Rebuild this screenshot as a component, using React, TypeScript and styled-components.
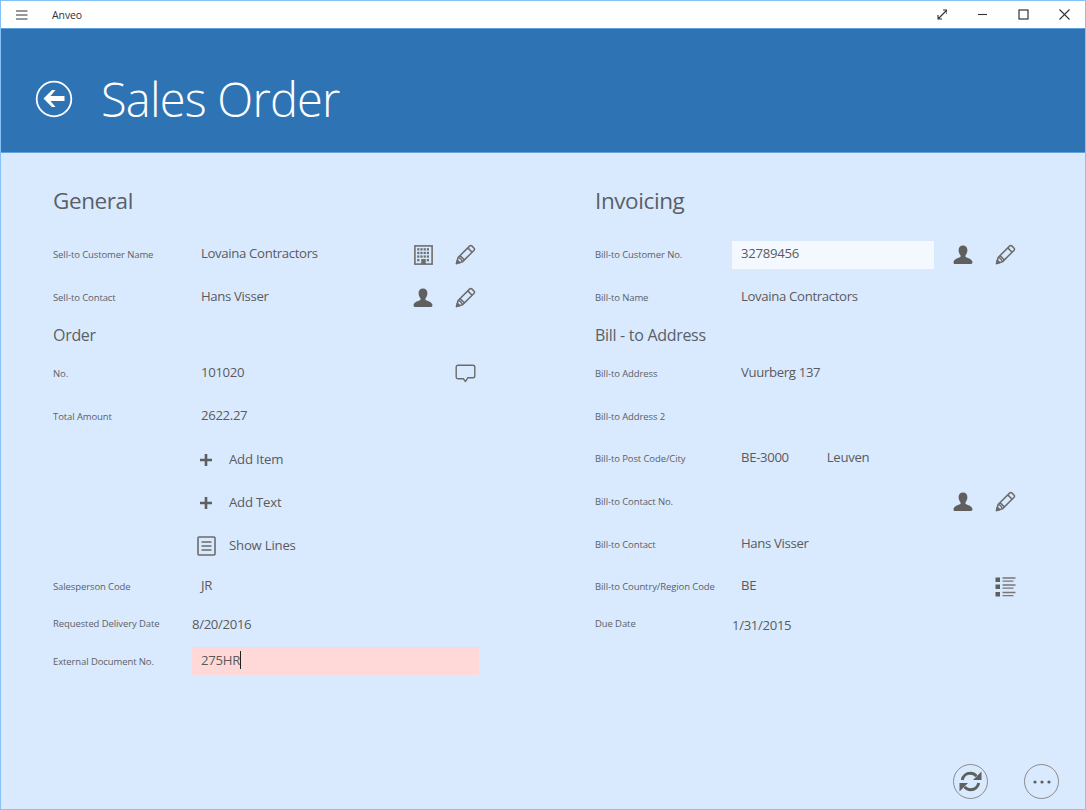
import React from "react";
import styled, { createGlobalStyle } from "styled-components";

const Global = createGlobalStyle`
  html, body { margin: 0; padding: 0; height: 100%; }
  body { font-family: "Open Sans", "Noto Sans", "Liberation Sans", sans-serif; color: #5b5b5b; }
`;

const Frame = styled.div`
  box-sizing: border-box;
  width: 1086px;
  height: 810px;
  display: flex;
  flex-direction: column;
  border: 1px solid #86c1f7;
  background: #d9eaff;
  overflow: hidden;
`;

const TitleBar = styled.div`
  flex: 0 0 27px;
  display: flex;
  align-items: center;
  background: #fff;
  color: #333;
`;

const Burger = styled.div`
  width: 51px;
  display: flex;
  justify-content: center;
  padding-right: 9px;
  box-sizing: border-box;
`;

const AppName = styled.span`
  flex: 1;
  font-size: 10.5px;
  letter-spacing: -0.1px;
`;

const WinButton = styled.div`
  width: 41px;
  display: flex;
  justify-content: center;
`;

const Header = styled.header`
  flex: 0 0 125px;
  box-sizing: border-box;
  display: flex;
  align-items: center;
  gap: 28px;
  padding: 17px 0 0 34px;
  background: #2e74b5;
  border-top: 1px solid #5f9fdc;
  border-bottom: 1px solid #5f9fdc;
`;

const Title = styled.h1`
  margin: 0;
  font-size: 47px;
  line-height: 60px;
  font-weight: 300;
  color: #fff;
  letter-spacing: -0.8px;
`;

const Content = styled.main`
  flex: 1;
  display: grid;
  grid-template-columns: 542px 1fr;
  padding: 30px 0 0 52px;
  min-height: 0;
`;

const Column = styled.section`
  display: flex;
  flex-direction: column;
`;

const Heading = styled.h2`
  margin: 0 0 14px;
  height: 36px;
  line-height: 36px;
  font-size: 22.5px;
  font-weight: 400;
  letter-spacing: -0.4px;
  color: #5b5f66;
`;

const SubHeading = styled.h3`
  margin: 0;
  height: 33px;
  line-height: 32px;
  font-size: 16px;
  font-weight: 400;
  letter-spacing: -0.3px;
  color: #5b5f66;
`;

const Row = styled.div<{ $h?: number; $right?: boolean }>`
  height: ${(p) => p.$h ?? 43}px;
  display: grid;
  grid-template-columns: ${(p) => (p.$right ? "137px 210px 42px 42px" : "139px 210px 42px 42px")};
  align-items: center;
`;

const Label = styled.span`
  font-size: 9.5px;
  letter-spacing: -0.1px;
  color: #5d6065;
  white-space: nowrap;
`;

const Value = styled.span<{ $inset?: number; $up?: number; $down?: number }>`
  padding-left: ${(p) => p.$inset ?? 0}px;
  padding-bottom: ${(p) => p.$up ?? 4}px;
  padding-top: ${(p) => p.$down ?? 0}px;
  font-size: 13.2px;
  letter-spacing: -0.35px;
  color: #5b5b5b;
  white-space: nowrap;
  display: flex;
  gap: 38px;
`;

const TextField = styled.div<{ $bg: string; $span: number; $w: number }>`
  grid-column: span ${(p) => p.$span};
  box-sizing: border-box;
  width: ${(p) => p.$w}px;
  height: 28px;
  padding: 0 0 3px 9px;
  display: flex;
  align-items: center;
  background: ${(p) => p.$bg};
  font-size: 13.2px;
  letter-spacing: -0.3px;
  color: #5b5b5b;
`;

const Caret = styled.span`
  width: 1px;
  height: 18px;
  background: #222;
`;

const IconCell = styled.div`
  display: flex;
  justify-content: center;
  align-items: center;
`;

const Action = styled.div`
  grid-column: 2 / span 3;
  display: flex;
  align-items: center;
  margin-left: 1px;
`;

const ActionIcon = styled.div`
  width: 28px;
  margin-left: -1px;
  margin-right: 9px;
  display: flex;
  justify-content: center;
`;

const ActionText = styled.span`
  font-size: 13.2px;
  letter-spacing: -0.22px;
  padding-bottom: 2px;
  color: #5b5b5b;
`;

const BottomBar = styled.footer`
  flex: 0 0 54px;
  display: flex;
  justify-content: flex-end;
  gap: 36px;
  padding: 9px 26px 0 0;
  box-sizing: border-box;
`;

const RoundButton = styled.div`
  box-sizing: border-box;
  width: 35px;
  height: 35px;
  border-radius: 50%;
  border: 1.5px solid #8a8a8a;
  display: flex;
  align-items: center;
  justify-content: center;
`;

const Glyph = styled.svg`
  display: block;
  flex: none;
`;

const C = "#5f5f5f";

const Pencil = () => (
  <Glyph width="21" height="21" viewBox="0 0 21 21" fill="none" stroke="#6b6b6b" strokeWidth="1.5" strokeLinejoin="round">
    <path d="M1.5 19.5l1.6-6L14.8 1.9c.6-.6 1.4-.6 2 0l2.3 2.3c.6.6.6 1.4 0 2L7.4 17.9z" />
    <path d="M3.1 13.5c1.6.2 3.3 1.8 4.3 4.4M5 11.6l4.5 4.4M12.8 3.9l4.3 4.3" />
    <path d="M1.5 19.5l.9-3.3 2.4 2.4z" fill="#6b6b6b" />
  </Glyph>
);

const Person = () => (
  <Glyph width="20" height="20" viewBox="0 0 20 20" fill={C}>
    <path d="M10 .6c2.7 0 4.4 2 4.4 4.7 0 2-.8 3.9-1.9 5v1.6c1.9 1 6.3 1.7 6.9 4.9.2 1.3-.3 2.2-1.4 2.2H1.9C.8 19 .4 18.1.6 16.8c.6-3.2 5-3.9 6.9-4.9v-1.6C6.4 9.2 5.6 7.3 5.6 5.3 5.6 2.6 7.3.6 10 .6z" />
  </Glyph>
);

const Building = () => (
  <Glyph width="19" height="20" viewBox="0 0 19 20">
    <rect x=".9" y=".9" width="17.2" height="18.2" fill="none" stroke="#6e6e6e" strokeWidth="1.6" />
    <g fill="#6e6e6e">
      {[3.2, 6.8, 10.4].map((y) =>
        [3.2, 6.4, 9.6, 12.8].map((x) => <rect key={`${x}-${y}`} x={x} y={y} width="2.2" height="2.3" />)
      )}
      <rect x="3.2" y="14" width="2.2" height="2.3" />
      <rect x="7.2" y="14" width="4.6" height="5" />
      <rect x="12.8" y="14" width="2.2" height="2.3" />
    </g>
  </Glyph>
);

const Comment = () => (
  <Glyph width="21" height="19" viewBox="0 0 21 19" fill="none" stroke="#6b6b6b" strokeWidth="1.4" strokeLinejoin="round">
    <path d="M3 1.2h15c1 0 1.8.8 1.8 1.8v9c0 1-.8 1.8-1.8 1.8h-5.3L10.5 17.5 8.3 14.8H3c-1 0-1.8-.8-1.8-1.8V3c0-1 .8-1.8 1.8-1.8z" />
  </Glyph>
);

const Plus = () => (
  <Glyph width="14" height="14" viewBox="0 0 14 14" fill={C}>
    <path d="M5.7 1h2.6v4.700H13v2.600H8.3V13H5.7V8.300H1V5.700h4.700z" />
  </Glyph>
);

const LinesDoc = () => (
  <Glyph width="19" height="20" viewBox="0 0 19 20" fill="none" stroke="#6b6b6b">
    <rect x="1" y="1" width="17" height="18" rx="1" strokeWidth="1.6" />
    <path d="M4.5 6h10M4.5 10h10M4.5 14h10" strokeWidth="1.5" />
  </Glyph>
);

const Bullets = () => (
  <Glyph width="21" height="20" viewBox="0 0 21 20">
    <g fill={C}>
      <rect x="0.5" y="0.5" width="4.5" height="4.5" />
      <rect x="0.5" y="7.5" width="4.5" height="4.5" />
      <rect x="0.5" y="15" width="4.5" height="4.5" />
    </g>
    <path d="M7.5 1h13M7.5 4.2h11M7.5 8h13M7.5 11.2h11M7.5 15.5h13M7.5 18.7h11" stroke="#777" strokeWidth="1.3" />
  </Glyph>
);

const Sync = () => (
  <Glyph width="23" height="23" viewBox="0 0 23 23" fill="none" stroke={C} strokeWidth="3">
    <path d="M3.3 10C4 6 7.3 3.3 11.3 3.3c2.5 0 4.6 1 6.100 2.800" />
    <path d="M19.7 13c-.7 4-4 6.700-8 6.700-2.500 0-4.600-1-6.100-2.800" />
    <path d="M14 10h8.500V1.500z" fill={C} stroke="none" />
    <path d="M9 13H.5v8.500z" fill={C} stroke="none" />
  </Glyph>
);

const Dots = () => (
  <Glyph width="20" height="4" viewBox="0 0 20 4" fill={C}>
    <circle cx="3" cy="2" r="1.6" />
    <circle cx="10" cy="2" r="1.6" />
    <circle cx="17" cy="2" r="1.6" />
  </Glyph>
);

const BackArrow = () => (
  <Glyph width="38" height="38" viewBox="0 0 38 38" fill="none">
    <circle cx="19" cy="19" r="17.3" stroke="#fff" strokeWidth="1.8" />
    <path d="M8.5 18.500L17 10h3.500L15.500 16H29.500v5H15.500L20.500 27H17z" fill="#fff" />
  </Glyph>
);

const Menu = () => (
  <Glyph width="12" height="10" viewBox="0 0 12 10" stroke="#333" strokeWidth="1.1">
    <path d="M0 1h11.500M0 5h11.500M0 9h11.500" />
  </Glyph>
);

const Expand = () => (
  <Glyph width="11" height="11" viewBox="-1 0 11 11" fill="none" stroke="#333" strokeWidth="1.1">
    <path d="M1.500 9.500l8-8M6 1h4v4M1 6v4h4" />
  </Glyph>
);

const Minimize = () => (
  <Glyph width="11" height="11" viewBox="0 0 11 11" stroke="#333" strokeWidth="1.1">
    <path d="M1 5.500h9" />
  </Glyph>
);

const Maximize = () => (
  <Glyph width="11" height="11" viewBox="0 0 11 11" fill="none" stroke="#333" strokeWidth="1.2">
    <rect x="1" y="1" width="9" height="9" />
  </Glyph>
);

const Close = () => (
  <Glyph width="11" height="11" viewBox="0 0 11 11" stroke="#333" strokeWidth="1.1">
    <path d="M.5.500l10 10M10.500.500l-10 10" />
  </Glyph>
);

export default function App() {
  return (
    <Frame>
      <Global />
      <TitleBar>
        <Burger><Menu /></Burger>
        <AppName>Anveo</AppName>
        <WinButton><Expand /></WinButton>
        <WinButton><Minimize /></WinButton>
        <WinButton><Maximize /></WinButton>
        <WinButton><Close /></WinButton>
      </TitleBar>
      <Header>
        <BackArrow />
        <Title>Sales Order</Title>
      </Header>
      <Content>
        <Column>
          <Heading>General</Heading>
          <Row>
            <Label>Sell-to Customer Name</Label>
            <Value $inset={9}>Lovaina Contractors</Value>
            <IconCell><Building /></IconCell>
            <IconCell><Pencil /></IconCell>
          </Row>
          <Row>
            <Label>Sell-to Contact</Label>
            <Value $inset={9}>Hans Visser</Value>
            <IconCell><Person /></IconCell>
            <IconCell><Pencil /></IconCell>
          </Row>
          <SubHeading>Order</SubHeading>
          <Row>
            <Label>No.</Label>
            <Value $inset={9}>101020</Value>
            <span />
            <IconCell><Comment /></IconCell>
          </Row>
          <Row>
            <Label>Total Amount</Label>
            <Value $inset={9}>2622.27</Value>
          </Row>
          <Row>
            <span />
            <Action><ActionIcon><Plus /></ActionIcon><ActionText>Add Item</ActionText></Action>
          </Row>
          <Row>
            <span />
            <Action><ActionIcon><Plus /></ActionIcon><ActionText>Add Text</ActionText></Action>
          </Row>
          <Row>
            <span />
            <Action><ActionIcon><LinesDoc /></ActionIcon><ActionText>Show Lines</ActionText></Action>
          </Row>
          <Row $h={38}>
            <Label>Salesperson Code</Label>
            <Value $inset={9} $up={2}>JR</Value>
          </Row>
          <Row $h={37}>
            <Label>Requested Delivery Date</Label>
            <Value $up={0} $down={1}>8/20/2016</Value>
          </Row>
          <Row $h={38}>
            <Label>External Document No.</Label>
            <TextField $bg="#ffd9d7" $span={3} $w={287}>275HR<Caret /></TextField>
          </Row>
        </Column>
        <Column>
          <Heading>Invoicing</Heading>
          <Row $right>
            <Label>Bill-to Customer No.</Label>
            <TextField $bg="#f4f9ff" $span={1} $w={202}>32789456</TextField>
            <IconCell><Person /></IconCell>
            <IconCell><Pencil /></IconCell>
          </Row>
          <Row $right>
            <Label>Bill-to Name</Label>
            <Value $inset={9}>Lovaina Contractors</Value>
          </Row>
          <SubHeading>Bill - to Address</SubHeading>
          <Row $right>
            <Label>Bill-to Address</Label>
            <Value $inset={9}>Vuurberg 137</Value>
          </Row>
          <Row $right $h={42}>
            <Label>Bill-to Address 2</Label>
          </Row>
          <Row $right>
            <Label>Bill-to Post Code/City</Label>
            <Value $inset={9}><span>BE-3000</span><span>Leuven</span></Value>
          </Row>
          <Row $right>
            <Label>Bill-to Contact No.</Label>
            <span />
            <IconCell><Person /></IconCell>
            <IconCell><Pencil /></IconCell>
          </Row>
          <Row $right>
            <Label>Bill-to Contact</Label>
            <Value $inset={9}>Hans Visser</Value>
          </Row>
          <Row $right $h={41}>
            <Label>Bill-to Country/Region Code</Label>
            <Value $inset={9}>BE</Value>
            <span />
            <IconCell><Bullets /></IconCell>
          </Row>
          <Row $right $h={32}>
            <Label>Due Date</Label>
            <Value $up={0} $down={4}>1/31/2015</Value>
          </Row>
        </Column>
      </Content>
      <BottomBar>
        <RoundButton><Sync /></RoundButton>
        <RoundButton><Dots /></RoundButton>
      </BottomBar>
    </Frame>
  );
}
